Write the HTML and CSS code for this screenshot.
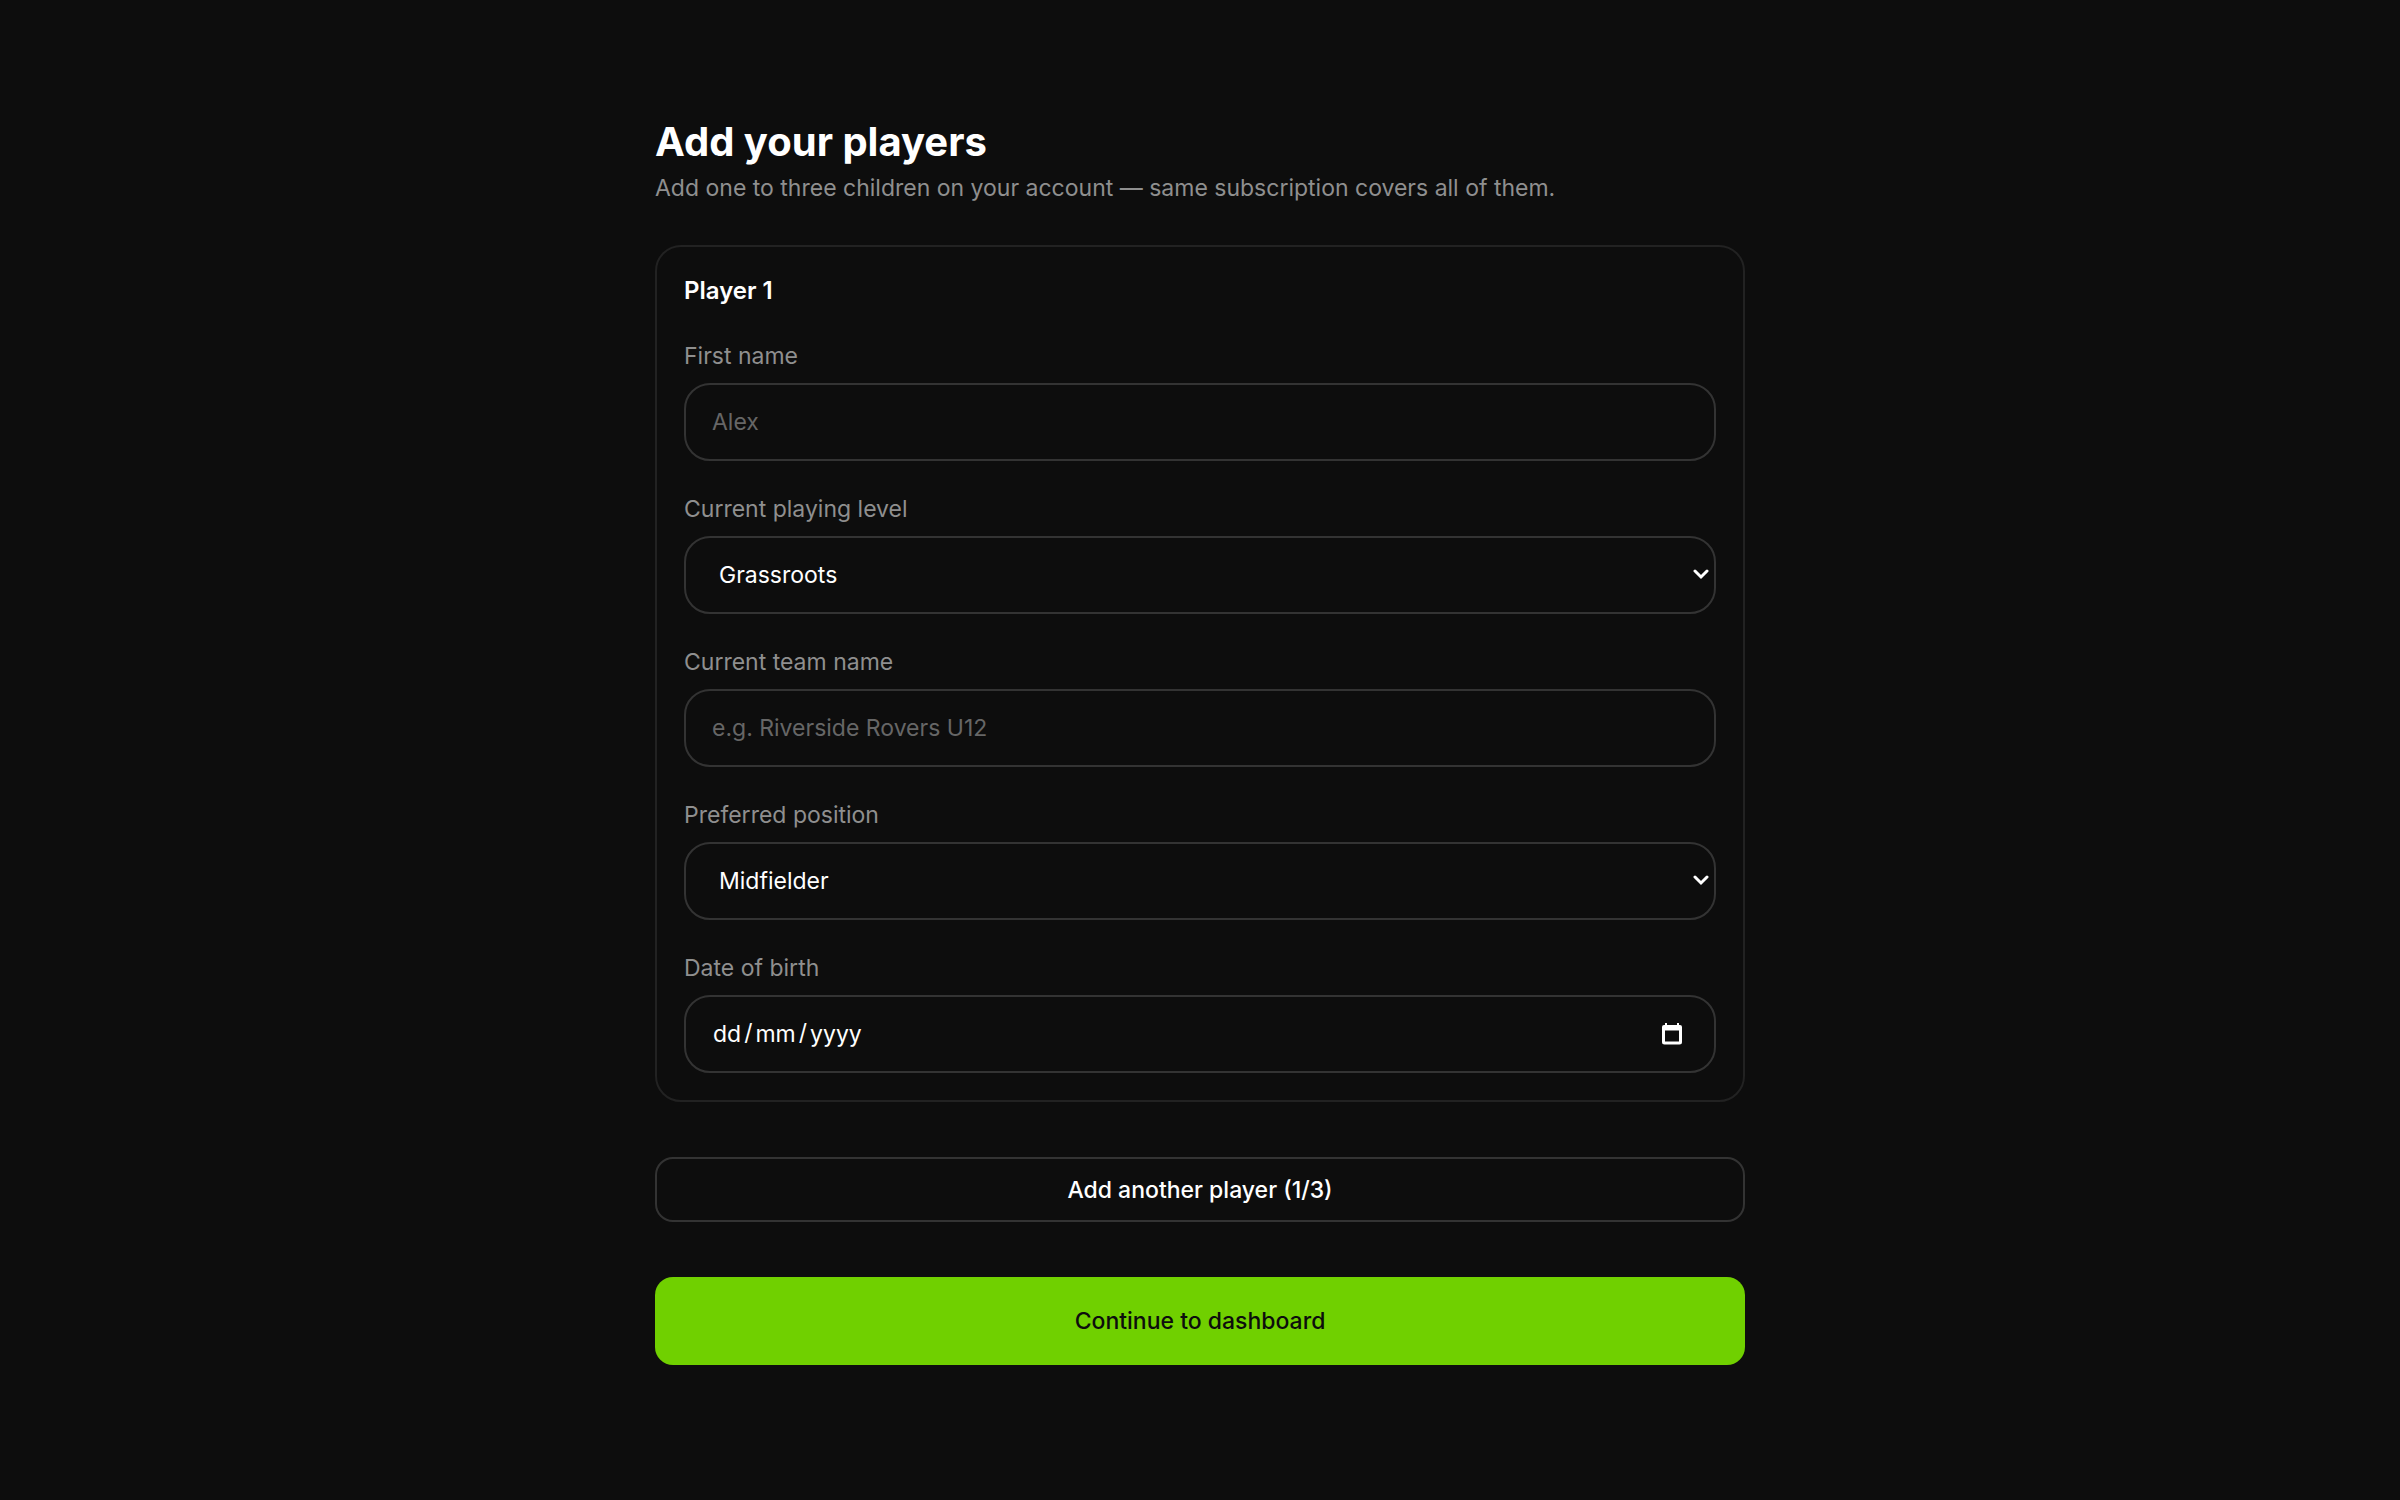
FILE: index.html
```html
<!DOCTYPE html>
<html lang="en-GB">
<head>
<meta charset="utf-8">
<meta name="viewport" content="width=device-width, initial-scale=1">
<title>Add your players</title>
<link rel="stylesheet" href="styles.css">
</head>
<body>
<main class="page">
  <header class="intro">
    <h1 class="title">Add your players</h1>
    <p class="subtitle">Add one to three children on your account — same subscription covers all of them.</p>
  </header>
  <form class="form">
    <section class="card">
      <h2 class="card-title">Player 1</h2>
      <div class="field">
        <label class="label" for="first-name">First name</label>
        <input class="control" id="first-name" type="text" placeholder="Alex">
      </div>
      <div class="field">
        <label class="label" for="level">Current playing level</label>
        <div class="control-wrap">
          <select class="control select" id="level">
            <option selected>Grassroots</option>
            <option>Academy</option>
          </select>
          <svg class="chevron" viewBox="0 0 18 12" aria-hidden="true"><path d="M3 2l6 6 6-6"/></svg>
        </div>
      </div>
      <div class="field">
        <label class="label" for="team">Current team name</label>
        <input class="control" id="team" type="text" placeholder="e.g. Riverside Rovers U12">
      </div>
      <div class="field">
        <label class="label" for="position">Preferred position</label>
        <div class="control-wrap">
          <select class="control select" id="position">
            <option>Goalkeeper</option>
            <option>Defender</option>
            <option selected>Midfielder</option>
            <option>Forward</option>
          </select>
          <svg class="chevron" viewBox="0 0 18 12" aria-hidden="true"><path d="M3 2l6 6 6-6"/></svg>
        </div>
      </div>
      <div class="field">
        <label class="label" for="birth">Date of birth</label>
        <div class="control-wrap">
          <input class="control date" id="birth" type="date">
          <svg class="calendar" viewBox="0 0 22 24" aria-hidden="true"><path fill-rule="evenodd" d="M4 1h2v2h10V1h2v2h1q2 0 2 2v15q0 2.500-2.500 2.500h-15Q1 22.500 1 20V5q0-2 2-2h1zM4 8.500V19.500h14V8.500z"/></svg>
        </div>
      </div>
    </section>
    <button class="button button-outline" type="button">Add another player (1/3)</button>
    <button class="button button-primary" type="submit">Continue to dashboard</button>
  </form>
</main>
</body>
</html>
```
FILE: styles.css
```css
* {
  box-sizing: border-box;
}

body {
  margin: 0;
  min-height: 100vh;
  background: #0d0d0d;
  color: #fff;
  font: 400 23px/36px Inter, "Liberation Sans", sans-serif;
  color-scheme: dark;
}

.page {
  max-width: 1138px;
  margin: 0 auto;
  padding: 118px 24px;
}

.intro {
  display: flex;
  flex-direction: column;
  gap: 4px;
  margin-bottom: 39px;
}

.title,
.subtitle,
.card-title {
  margin: 0;
}

.title {
  font-size: 40px;
  line-height: 48px;
  font-weight: 700;
}

.subtitle,
.label {
  color: #8f8f8f;
}

.form {
  display: flex;
  flex-direction: column;
  gap: 55px;
}

.card {
  display: flex;
  flex-direction: column;
  gap: 30px;
  padding: 27px;
  border: 2px solid #222;
  border-radius: 26px;
}

.card-title {
  font-size: 24px;
  line-height: 34px;
  font-weight: 600;
}

.field {
  display: flex;
  flex-direction: column;
  gap: 9px;
}

.control-wrap {
  display: grid;
  align-items: center;
}

.control-wrap > * {
  grid-area: 1 / 1;
}

.control {
  width: 100%;
  height: 78px;
  margin: 0;
  padding: 0 26px;
  border: 2px solid #333;
  border-radius: 26px;
  background: transparent;
  color: #fff;
  font: inherit;
}

.control::placeholder {
  color: #666;
  opacity: 1;
}

.select {
  appearance: none;
  padding: 0 33px;
}

.chevron {
  justify-self: end;
  width: 18px;
  height: 12px;
  margin-right: 6px;
  fill: none;
  stroke: #fff;
  stroke-width: 3;
  stroke-linecap: round;
  pointer-events: none;
}

/* Day, month and year take fixed columns; the slashes fill the gaps. */
.date::-webkit-datetime-edit-fields-wrapper {
  display: inline-grid;
  grid-template-columns: repeat(5, auto);
  column-gap: 2px;
}

.date::-webkit-datetime-edit-day-field {
  grid-area: 1 / 1;
}

.date::-webkit-datetime-edit-month-field {
  grid-area: 1 / 3;
}

.date::-webkit-datetime-edit-year-field {
  grid-area: 1 / 5;
}

.date::-webkit-calendar-picker-indicator {
  opacity: 0;
}

.calendar {
  justify-self: end;
  width: 22px;
  height: 24px;
  margin-right: 33px;
  fill: #fff;
  pointer-events: none;
}

.button {
  border-radius: 18px;
  font: inherit;
  font-weight: 500;
  cursor: pointer;
}

.button-outline {
  height: 65px;
  border: 2px solid #333;
  background: transparent;
  color: #fff;
}

.button-primary {
  height: 88px;
  border: 0;
  background: #70d000;
  color: #0d0d0d;
}
```
